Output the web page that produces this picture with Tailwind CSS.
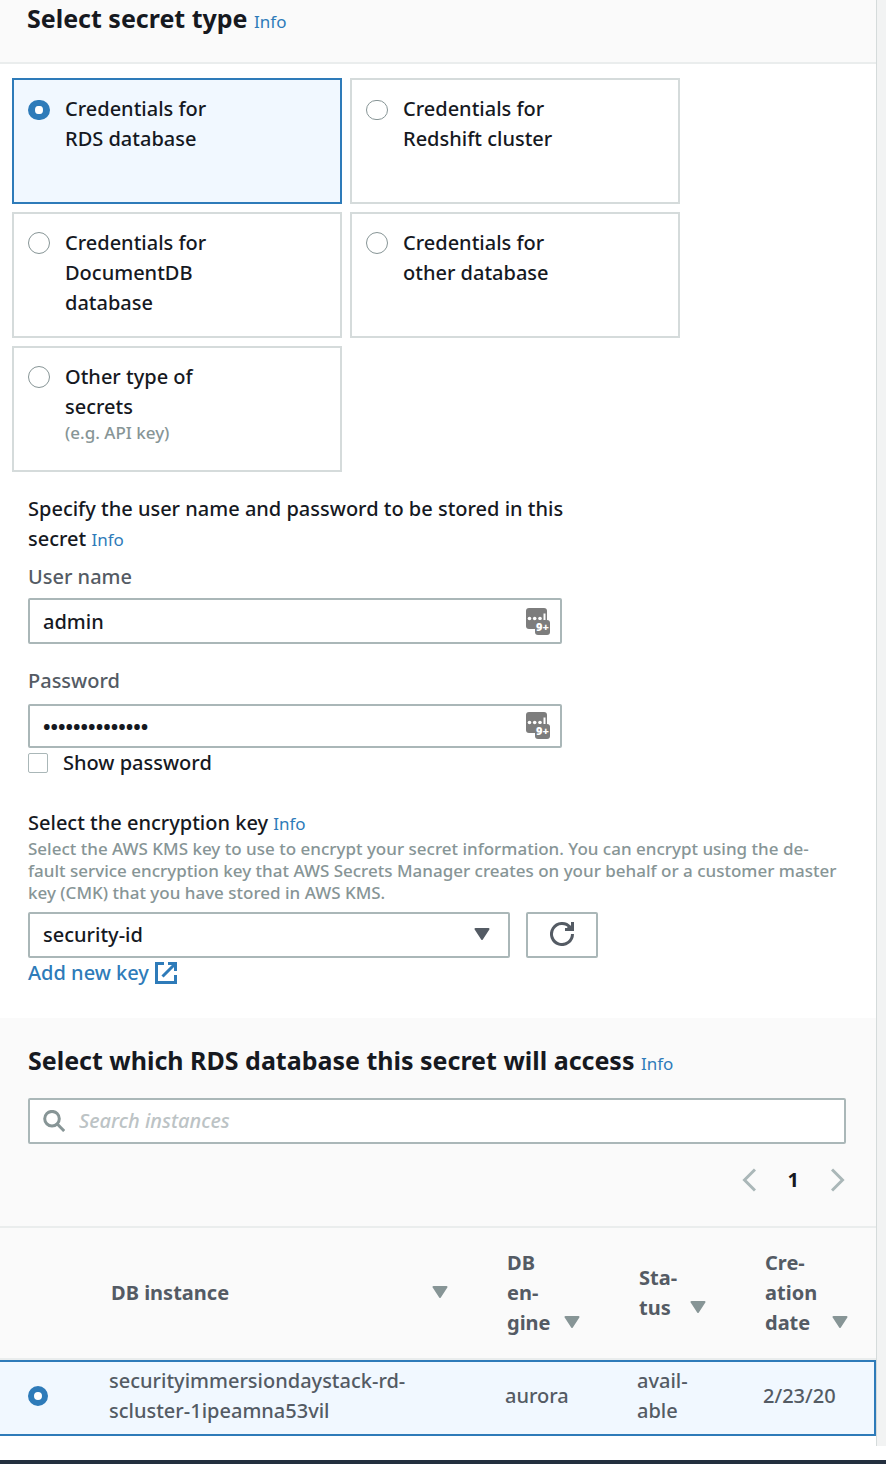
<!DOCTYPE html>
<html lang="en">
<head>
<meta charset="utf-8">
<meta name="viewport" content="width=device-width, initial-scale=1">
<title>Store a new secret</title>
<script src="https://cdn.jsdelivr.net/npm/@tailwindcss/browser@4"></script>
</head>
<body class="bg-white font-['Noto_Sans',sans-serif] text-[20px] leading-[30px] font-medium text-[#16191f]">
<svg class="hidden" aria-hidden="true">
  <symbol id="sort" viewBox="0 0 16 12"><path d="M1.5 1h13L8 11z" fill="currentColor" stroke="currentColor" stroke-width="2" stroke-linejoin="round"/></symbol>
  <symbol id="vault" viewBox="0 0 24 27">
    <rect width="21" height="21" rx="3" fill="#7d7d7d"/>
    <circle cx="3.500" cy="10.500" r="1.800" fill="#fff"/><circle cx="8.700" cy="10.500" r="1.800" fill="#fff"/><circle cx="14" cy="10.500" r="1.800" fill="#fff"/>
    <path d="M18.500 5.500v7" stroke="#fff" stroke-width="2"/>
    <rect x="9" y="12" width="15" height="15" rx="3" fill="#7d7d7d"/>
    <text x="16.500" y="23" text-anchor="middle" font-family="Open Sans, sans-serif" font-weight="800" font-size="11" fill="#fff">9+</text>
  </symbol>
</svg>

<div class="flex">
  <main class="min-w-0 flex-1 border-r border-[#d5dbdb] pb-[10px]">
    <section>
      <header class="border-b-2 border-[#eaeded] bg-[#fafafa] px-[27px] pb-[26px]">
        <h1 class="text-[25px] leading-9 font-bold">Select secret type <a href="#" class="text-[17px] leading-none font-normal text-[#2e7bb9]">Info</a></h1>
      </header>

      <fieldset aria-label="Secret type" class="mx-3 mt-3.5 grid max-w-[668px] grid-cols-2 gap-2">
        <label class="flex min-h-[126px] gap-[15px] border-2 border-[#2e7bb9] bg-[#f1f8ff] px-3.5 py-3.5">
          <input type="radio" name="type" checked class="mt-1.5 h-5 w-[22px] shrink-0 appearance-none rounded-full border border-[#aab7b8] bg-white checked:border-x-[7px] checked:border-y-6 checked:border-[#2e7bb9]">
          <span class="max-w-40">Credentials for RDS database</span>
        </label>
        <label class="flex min-h-[126px] gap-[15px] border-2 border-[#d5dbdb] px-3.5 py-3.5">
          <input type="radio" name="type" class="mt-1.5 h-5 w-[22px] shrink-0 appearance-none rounded-full border border-[#879596] bg-white checked:border-x-[7px] checked:border-y-6 checked:border-[#2e7bb9]">
          <span class="max-w-40">Credentials for Redshift cluster</span>
        </label>
        <label class="flex min-h-[126px] gap-[15px] border-2 border-[#d5dbdb] px-3.5 py-3.5">
          <input type="radio" name="type" class="mt-1 size-[22px] shrink-0 appearance-none rounded-full border border-[#879596] bg-white checked:border-[7px] checked:border-[#2e7bb9]">
          <span class="max-w-40">Credentials for DocumentDB database</span>
        </label>
        <label class="flex min-h-[126px] gap-[15px] border-2 border-[#d5dbdb] px-3.5 py-3.5">
          <input type="radio" name="type" class="mt-1 size-[22px] shrink-0 appearance-none rounded-full border border-[#879596] bg-white checked:border-[7px] checked:border-[#2e7bb9]">
          <span class="max-w-40">Credentials for other database</span>
        </label>
        <label class="flex min-h-[126px] gap-[15px] border-2 border-[#d5dbdb] px-3.5 py-3.5">
          <input type="radio" name="type" class="mt-1 size-[22px] shrink-0 appearance-none rounded-full border border-[#879596] bg-white checked:border-[7px] checked:border-[#2e7bb9]">
          <span class="max-w-40">Other type of secrets <small class="block text-[17px] leading-[22px] text-[#879596]">(e.g. API key)</small></span>
        </label>
      </fieldset>

      <div class="px-7 pt-[22px] pb-[30px]">
        <p class="max-w-[560px]">Specify the user name and password to be stored in this secret <a href="#" class="text-[17px] leading-none font-normal text-[#2e7bb9]">Info</a></p>

        <div class="mt-2 max-w-[534px]">
          <label for="user" class="block text-[#545b64]">User name</label>
          <div class="relative mt-1.5">
            <input id="user" type="text" value="admin" class="block h-[46px] w-full rounded-xs border-2 border-[#aab7b8] bg-white pr-12 pl-[13px]">
            <svg class="absolute top-2.5 right-3 h-[27px] w-6" aria-hidden="true"><use href="#vault"/></svg>
          </div>
          <label for="pass" class="mt-[22px] block text-[#545b64]">Password</label>
          <div class="relative mt-2">
            <input id="pass" type="password" value="immersion-day1" class="block h-11 w-full rounded-xs border-2 border-[#aab7b8] bg-white pr-12 pl-[13px] font-bold">
            <svg class="absolute top-2 right-3 h-[27px] w-6" aria-hidden="true"><use href="#vault"/></svg>
          </div>
          <label class="flex items-center gap-[15px]"><input type="checkbox" class="size-5 appearance-none rounded-xs border border-[#aab7b8] bg-white checked:bg-[#2e7bb9]">Show password</label>
        </div>

        <div class="mt-[30px]"><label for="kms">Select the encryption key</label> <a href="#" class="text-[17px] leading-none font-normal text-[#2e7bb9]">Info</a></div>
        <p class="text-[17px] leading-[22px] text-[#879596]">Select the AWS KMS key to use to encrypt your secret information. You can encrypt using the de-<br>fault service encryption key that AWS Secrets Manager creates on your behalf or a customer master<br>key (CMK) that you have stored in AWS KMS.</p>
        <div class="mt-2 flex gap-4">
          <div class="relative w-full max-w-[482px]">
            <select id="kms" class="block h-[46px] w-full appearance-none rounded-xs border-2 border-[#aab7b8] bg-white pr-12 pl-[13px]"><option>security-id</option></select>
            <svg class="pointer-events-none absolute top-4 right-5 h-3 w-4 text-[#545b64]" aria-hidden="true"><use href="#sort"/></svg>
          </div>
          <button type="button" aria-label="Refresh keys" class="flex h-[46px] w-[72px] justify-center rounded-xs border-2 border-[#aab7b8] bg-white pt-2 text-[#545b64]">
            <svg class="size-6" viewBox="0 0 24 24" fill="none" stroke="currentColor" stroke-width="3"><path d="M22.500 12A10.500 10.500 0 1 1 20 5.200"/><path d="M21 0h3v9h-9V6h2l2-3 2 1z" fill="currentColor" stroke="none"/></svg>
          </button>
        </div>
        <a href="#" class="flex items-center gap-1.5 text-[#2e7bb9]">Add new key
          <svg class="size-[22px]" viewBox="0 0 22 22" fill="none" stroke="currentColor" stroke-width="3" aria-hidden="true"><path d="M9 1.500H1.500v19h19V13M13 1.500h7.500V9M20 2L7.500 14.500"/></svg>
        </a>
      </div>
    </section>

    <section>
      <header class="border-b-2 border-[#eaeded] bg-[#fafafa] px-7 pt-6">
        <h2 class="text-[25px] leading-9 font-bold">Select which RDS database this secret will access <a href="#" class="text-[17px] leading-none font-normal text-[#2e7bb9]">Info</a></h2>
        <div class="relative mt-5 mr-0.5">
          <svg class="absolute top-3 left-[15px] size-[22px] text-[#879596]" viewBox="0 0 22 22" fill="none" stroke="currentColor" stroke-width="3" aria-hidden="true"><circle cx="9" cy="8.700" r="7.300"/><path d="M14 13.800l7.200 7.200"/></svg>
          <input type="search" aria-label="Search instances" placeholder="Search instances" class="block h-[46px] w-full rounded-xs border-2 border-[#aab7b8] bg-white pr-4 pb-0.5 pl-[49px] placeholder:text-[#bcc3c5] placeholder:italic">
        </div>
        <nav aria-label="Pages" class="flex items-center justify-end gap-8 pt-[21px] pr-[3px] pb-[31px]">
          <button type="button" aria-label="Previous page"><svg class="h-6 w-3.5" viewBox="0 0 14 24" fill="none" stroke="#aab7b8" stroke-width="3"><path d="M13 1.500L2.500 12 13 22.500"/></svg></button>
          <button type="button" class="h-[30px] font-bold">1</button>
          <button type="button" aria-label="Next page"><svg class="h-6 w-3.5" viewBox="0 0 14 24" fill="none" stroke="#aab7b8" stroke-width="3"><path d="M1 1.500L11.500 12 1 22.500"/></svg></button>
        </nav>
      </header>
      <table class="w-full table-fixed border-separate border-spacing-0 text-left text-[#545b64]">
        <colgroup><col class="w-[92px]"><col><col class="w-[132px]"><col class="w-[126px]"><col class="w-[130px]"></colgroup>
        <thead class="bg-[#fafafa]">
          <tr class="h-[132px]">
            <th aria-label="Selected" class="border-b-2 border-[#eaeded]"></th>
            <th class="border-b-2 border-[#eaeded] pr-10 pl-[19px] font-bold"><div class="flex items-end justify-between">DB instance<svg class="mb-2.5 h-3 w-4 shrink-0 text-[#879596]"><use href="#sort"/></svg></div></th>
            <th class="border-b-2 border-[#eaeded] pr-10 pl-[19px] font-bold"><div class="flex items-end justify-between"><span>DB<br>en-<br>gine</span><svg class="mb-2.5 h-3 w-4 shrink-0 text-[#879596]"><use href="#sort"/></svg></div></th>
            <th class="border-b-2 border-[#eaeded] pr-10 pl-[19px] font-bold"><div class="flex items-end justify-between"><span>Sta-<br>tus</span><svg class="mb-2.5 h-3 w-4 shrink-0 text-[#879596]"><use href="#sort"/></svg></div></th>
            <th class="border-b-2 border-[#eaeded] pr-7 pl-[19px] font-bold"><div class="flex items-end justify-between"><span>Cre-<br>ation<br>date</span><svg class="mb-2.5 h-3 w-4 shrink-0 text-[#879596]"><use href="#sort"/></svg></div></th>
          </tr>
        </thead>
        <tbody class="bg-[#f1f8ff]">
          <tr class="h-[76px]">
            <td class="border-y-2 border-[#2e7bb9] pb-1 pl-7"><input type="radio" name="db" checked aria-label="securityimmersiondaystack-rdscluster-1ipeamna53vil" class="block size-5 appearance-none rounded-full border border-[#aab7b8] bg-white checked:border-6 checked:border-[#2e7bb9]"></td>
            <td class="border-y-2 border-[#2e7bb9] pb-1 pl-[17px]">securityimmersiondaystack-rd-<br>scluster-1ipeamna53vil</td>
            <td class="border-y-2 border-[#2e7bb9] pb-1 pl-[17px]">aurora</td>
            <td class="border-y-2 border-[#2e7bb9] pb-1 pl-[17px]">avail-<br>able</td>
            <td class="border-y-2 border-r-2 border-[#2e7bb9] pb-1 pl-[17px]">2/23/20</td>
          </tr>
        </tbody>
      </table>
    </section>
  </main>
  <div class="w-[9px] bg-[#f2f3f3]"></div>
</div>
<footer class="mt-3.5 h-1 bg-[#232f3e]"></footer>
</body>
</html>
